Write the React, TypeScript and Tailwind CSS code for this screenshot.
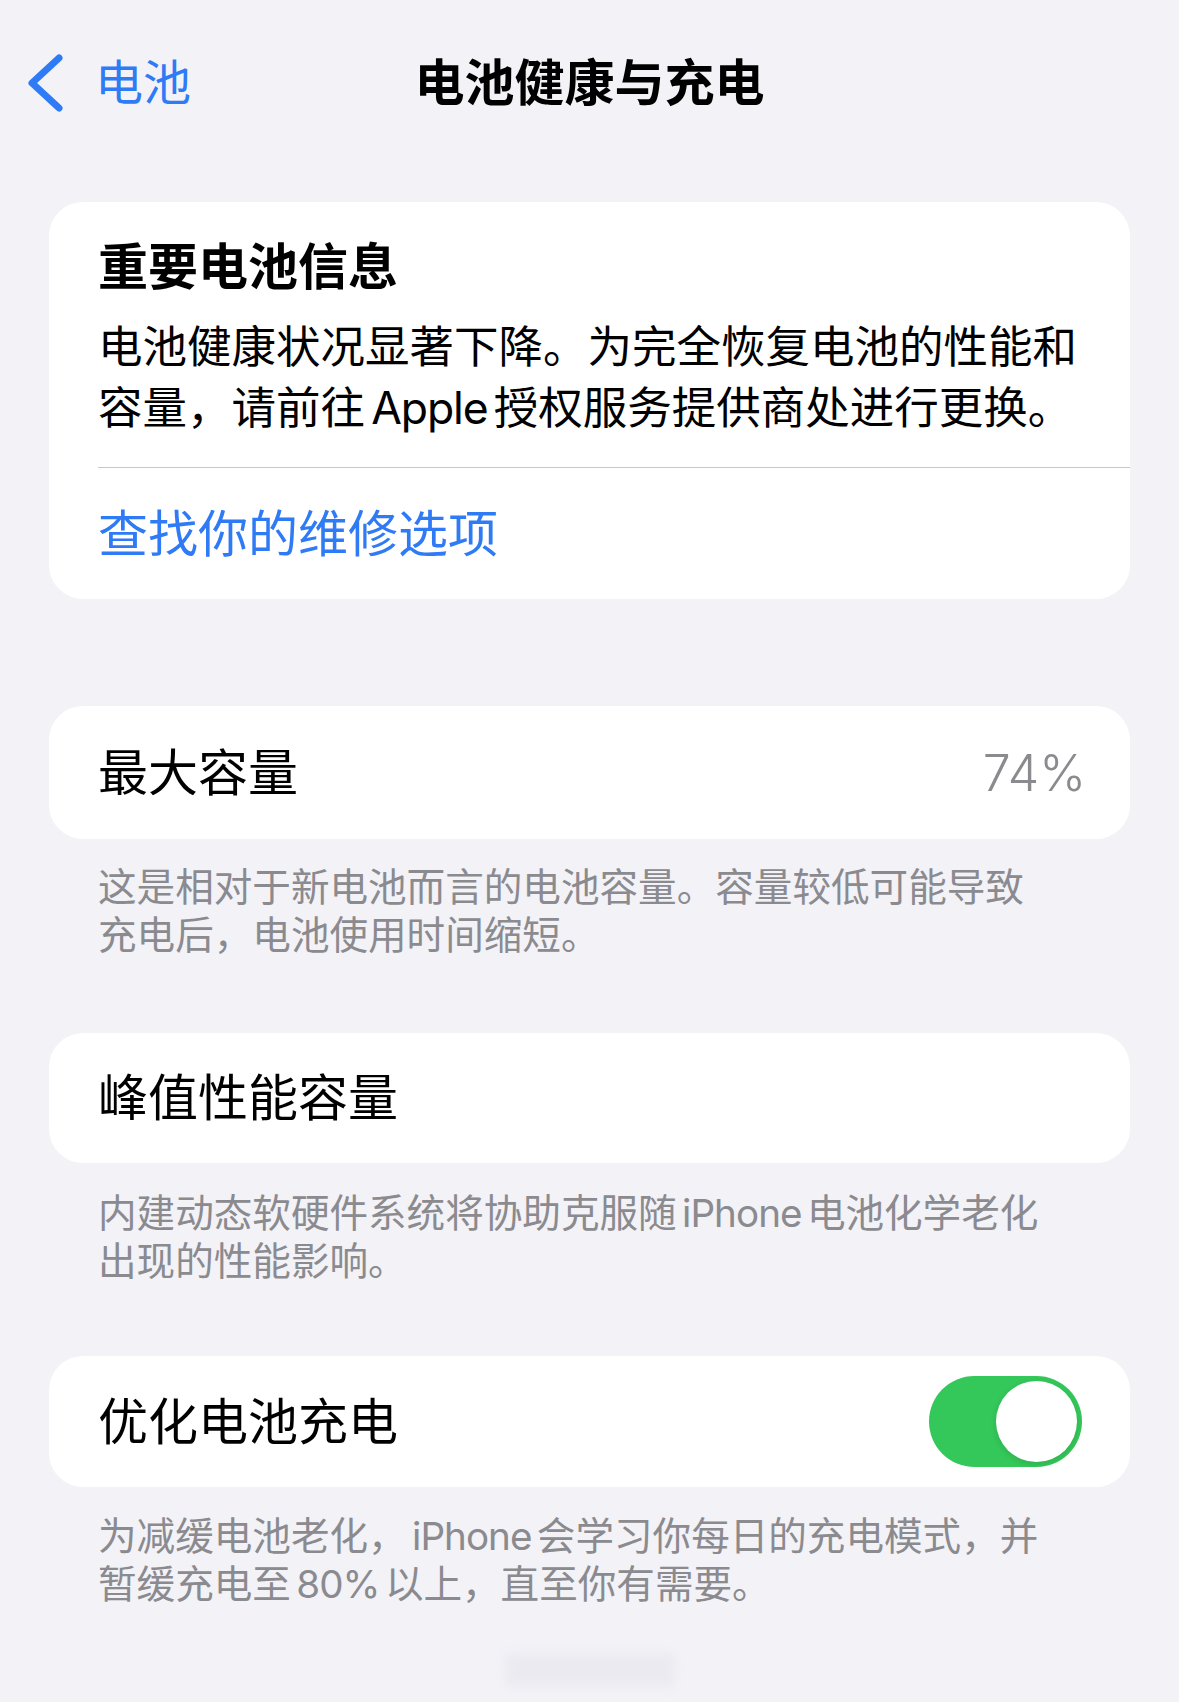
const footerText = "text-[38.6px] leading-[48px] text-[#8a8a8f] whitespace-nowrap";

// Latin words set inside CJK copy: tighter tracking and a thin gap on each side
function Latin({ children }: { children: string }) {
  return <span className="mx-[0.14em] tracking-[-0.025em]">{children}</span>;
}

function Toggle({ on }: { on: boolean }) {
  return (
    <div
      className={`flex h-[91px] w-[153px] items-center rounded-full p-[5px] ${
        on ? "justify-end bg-[#34c759]" : "justify-start bg-[#e9e9eb]"
      }`}
    >
      <div className="h-[81px] w-[81px] rounded-full bg-white shadow-[0_2px_6px_rgba(0,0,0,0.12)]" />
    </div>
  );
}

function BackArrow() {
  return (
    <svg width="38" height="62" viewBox="0 0 38 62" fill="none">
      <polyline
        points="33,6 6,31 33,56"
        stroke="#2f7bf5"
        strokeWidth="7"
        strokeLinecap="round"
        strokeLinejoin="round"
      />
    </svg>
  );
}

export default function App() {
  return (
    <div className="min-h-[1702px] bg-[#f2f2f7] font-[Inter,'Noto_Sans_CJK_SC',sans-serif] text-black antialiased">
      {/* Nav bar */}
      <header className="grid h-[166px] grid-cols-[1fr_auto_1fr] items-center">
        <button className="flex items-center pl-[26px]">
          <BackArrow />
          <span className="ml-[31px] text-[48px] leading-[60px] text-[#2f7bf5]">电池</span>
        </button>
        <h1 className="text-[50px] font-bold leading-[60px]">电池健康与充电</h1>
        <div />
      </header>

      <main className="px-[49px]">
        {/* Service notice */}
        <section className="mt-[36px] overflow-hidden rounded-[34px] bg-white">
          <div className="pb-[28px] pl-[49px] pr-[48px] pt-[35px]">
            <h2 className="text-[50px] font-bold leading-[60px]">重要电池信息</h2>
            <p className="mt-[20px] whitespace-nowrap text-[44.5px] leading-[61px]">
              电池健康状况显著下降。为完全恢复电池的性能和
              <br />
              容量，请前往<Latin>Apple</Latin>授权服务提供商处进行更换。
            </p>
          </div>
          <div className="ml-[49px] flex h-[132px] items-center border-t border-[#c8c8cc]">
            <a href="#" className="text-[50px] leading-[60px] text-[#2f7bf5]">
              查找你的维修选项
            </a>
          </div>
        </section>

        {/* Maximum capacity */}
        <section className="mt-[107px] flex h-[133px] items-center justify-between rounded-[34px] bg-white pl-[49px] pr-[44px]">
          <span className="text-[50px] leading-[60px]">最大容量</span>
          <span className="text-[50px] font-light leading-[60px] text-[#8a8a8f]">74%</span>
        </section>
        <p className={`mt-[24px] pl-[49px] ${footerText}`}>
          这是相对于新电池而言的电池容量。容量较低可能导致
          <br />
          充电后，电池使用时间缩短。
        </p>

        {/* Peak performance */}
        <section className="mt-[74px] flex h-[130px] items-center rounded-[34px] bg-white pl-[49px] pr-[48px]">
          <span className="text-[50px] leading-[60px]">峰值性能容量</span>
        </section>
        <p className={`mt-[26px] pl-[49px] ${footerText}`}>
          内建动态软硬件系统将协助克服随<Latin>iPhone</Latin>电池化学老化
          <br />
          出现的性能影响。
        </p>

        {/* Optimized charging */}
        <section className="mt-[71px] flex h-[131px] items-center justify-between rounded-[34px] bg-white pl-[49px] pr-[48px]">
          <span className="text-[50px] leading-[60px]">优化电池充电</span>
          <Toggle on />
        </section>
        <p className={`mt-[25px] pl-[49px] ${footerText}`}>
          为减缓电池老化，<Latin>iPhone</Latin>会学习你每日的充电模式，并
          <br />
          暂缓充电至<Latin>80%</Latin>以上，直至你有需要。
        </p>

        <div className="mx-auto mt-[45px] h-[34px] w-[170px] rounded bg-[#e6e6ec] opacity-60 blur-[4px]" />
      </main>
    </div>
  );
}
